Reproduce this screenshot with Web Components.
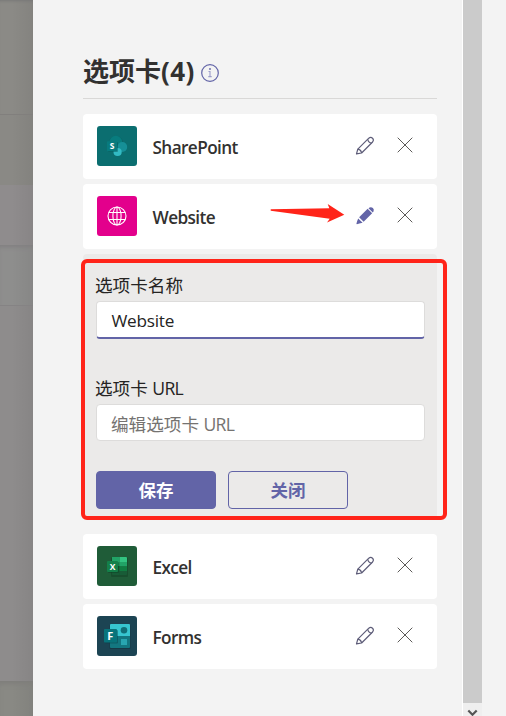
<!DOCTYPE html>
<html lang="zh-CN"><head><meta charset="utf-8"><title>选项卡</title>
<style>
html,body{margin:0;height:716px;overflow:hidden;background:#f3f3f3}
body{font-family:"Open Sans","Noto Sans CJK SC",sans-serif;color:#252423}
</style></head><body>
<tab-settings></tab-settings>
<script>
const define=(name,html)=>customElements.define(name,class extends HTMLElement{
  constructor(){super();this.attachShadow({mode:'open'});}
  connectedCallback(){
    this.shadowRoot.innerHTML=typeof html==='function'?html(this):html;
  }
});

const logos={
sharepoint:`<rect width="40" height="40" rx="3" fill="#0b6e70"/>
<circle cx="19" cy="17" r="7" fill="#0c5255" opacity=".4"/>
<circle cx="18.8" cy="16.2" r="6.4" fill="#087c7e"/><circle cx="25.3" cy="21" r="4.9" fill="#168f97"/><circle cx="20.6" cy="26" r="4.1" fill="#32bac3"/>
<rect x="11" y="16" width="10" height="10" rx="1" fill="#064f53" opacity=".45"/><rect x="10" y="15.2" width="10" height="10" rx=".8" fill="#087b7e"/>
<text x="15" y="23.3" text-anchor="middle" font-size="8.5">S</text>`,
website:`<rect width="40" height="40" rx="3" fill="#e3008c"/>
<g fill="none" stroke="#fff" stroke-width="1.1"><circle cx="20" cy="20" r="9"/><ellipse cx="20" cy="20" rx="4.1" ry="9"/><path d="M20 11v18M11.8 16.5h16.4M11.8 23.5h16.4"/></g>`,
excel:`<rect width="40" height="40" rx="3" fill="#1f5c38"/>
<rect x="14" y="11.5" width="17" height="19.5" rx="1" fill="#123f24" opacity=".5"/>
<path d="M15 11h7.5v9H15z" fill="#21a366"/><path d="M22.5 11H29a1 1 0 0 1 1 1v4h-7.500z" fill="#33c481"/><path d="M22.500 16H30v4.500h-7.500z" fill="#21a366"/><path d="M15 20h7.500v9H16a1 1 0 0 1-1-1z" fill="#185c37"/><path d="M22.500 20.500H30v4.500h-7.500z" fill="#107c41"/><path d="M22.500 25H30v3a1 1 0 0 1-1 1h-6.500z" fill="#185c37"/>
<rect x="11" y="16" width="11" height="11" rx="1" fill="#0b3f22" opacity=".45"/><rect x="10" y="15" width="11" height="11" rx="1" fill="#14804a"/>
<text x="15.500" y="23.500" text-anchor="middle" font-size="8.500">X</text>`,
forms:`<rect width="40" height="40" rx="3" fill="#1c4453"/>
<rect x="12.500" y="9" width="21" height="24" rx="1" fill="#102d38" opacity=".5"/>
<path d="M14 8h18a1 1 0 0 1 1 1v11H13V9a1 1 0 0 1 1-1z" fill="#37c6d0"/><path d="M13 20h20v11a1 1 0 0 1-1 1H14a1 1 0 0 1-1-1z" fill="#137780"/>
<circle cx="27" cy="14.200" r="3.300" fill="#117078"/><rect x="24" y="23" width="6" height="6" fill="#28a6b0"/>
<rect x="8" y="14" width="13" height="13.500" rx="1" fill="#093d47" opacity=".45"/><rect x="7" y="13" width="13" height="13.500" rx="1" fill="#08747b"/>
<text x="13.300" y="23.600" text-anchor="middle" font-size="11">F</text>`};

define('app-logo',el=>`<style>:host{display:block;width:40px;height:40px}svg{display:block}text{fill:#fff;font-family:"Open Sans",sans-serif;font-weight:700}</style><svg width="40" height="40">${logos[el.getAttribute('kind')]}</svg>`);

define('edit-icon',el=>`<style>:host{display:block;width:20px;height:20px}svg{display:block}</style><svg width="20" height="20" viewBox="0 0 20 20">${el.hasAttribute('active')
?`<g fill="#6264a7"><path d="m4.100 11.300 8.500-8.500 4.500 4.500-8.500 8.500z"/><path d="M13.500 2.200 14.600 1.500Q16.400.700 17.900 2.100t.600 3.300L17.800 6.400z"/><path d="m3.200 12.400 4.400 4.400-3.200.700-2.500.7-.5-.5.700-2.500z"/></g>`
:`<g fill="none" stroke="#5d5c78" stroke-width="1.200" stroke-linejoin="round"><path d="M1.500 17.900 2.800 13.200 13.800 2.200Q15.800.700 17.500 2.300T17.600 6L6.600 17z"/><path d="m12.800 3.200q.3 3.500 3.900 3.800M2.800 13.200q3.200.500 3.800 3.800"/></g>`}</svg>`);

define('close-icon',`<style>:host{display:block;width:16px;height:16px}svg{display:block}</style><svg width="16" height="16"><path d="M.7.700l14.600 14.600M15.300.700.700 15.300" stroke="#5c5a58" stroke-width="1" fill="none"/></svg>`);

define('tab-card',el=>`<style>:host{display:grid;grid-template-columns:40px 1fr 20px 16px;align-items:center;height:65px;box-sizing:border-box;padding:0 24.500px 1px 14px;background:#fff;border-radius:4px}
.name{padding:4px 0 0 15.500px;font:600 17.200px/24px "Open Sans",sans-serif;letter-spacing:-.6px;color:#323130}
close-icon{margin-top:-2.500px}
.edit{margin-left:-22px}</style>
<app-logo kind="${el.getAttribute('kind')}"></app-logo><span class="name"><slot></slot></span><edit-icon class="edit" ${el.hasAttribute('active')?'active':''}></edit-icon><close-icon></close-icon>`);

define('text-field',`<style>:host{display:block}label{display:block;box-sizing:border-box;height:27px;font-size:17.600px;line-height:22px;color:#252423;white-space:nowrap;margin-left:-1px}
.box{box-sizing:border-box;height:38px;border:1px solid #dddcdb;border-radius:4px;background:#fff;padding:1px 14.500px;font-size:17.200px;line-height:36px;letter-spacing:-.25px;color:#252423;white-space:nowrap}
:host([focused]) .box{border-bottom:2px solid #6264a7}
:host([empty]) .box{height:37px;color:#757371;font-size:17.600px;letter-spacing:0;padding-left:14px}</style>
<label><slot name="label"></slot></label><div class="box"><slot></slot></div>`);

define('action-button',`<style>:host{display:block;box-sizing:border-box;width:120px;height:38px;border:1px solid #6264a7;border-radius:4px;text-align:center;font-size:17.500px;line-height:36px;font-weight:700;color:#6264a7}:host([primary]){background:#6264a7;color:#fff}</style><slot></slot>`);

define('edit-form',`<style>:host{display:block;position:relative;box-sizing:border-box;height:265px;margin-bottom:10px;padding:20px 12px 0 13px;background:#ebeae9;border-radius:4px}
text-field+text-field{margin-top:38px}.actions{display:flex;gap:12px;margin-top:30px}
.mark{position:absolute;left:-2px;top:5px;width:366px;height:261px;box-sizing:border-box;border:4px solid #ff2419;border-radius:6px;pointer-events:none}.l{letter-spacing:-.8px}</style>
<text-field focused><span slot="label">选项卡名称</span>Website</text-field>
<text-field empty><span slot="label">选项卡 <span class="l">URL</span></span>编辑选项卡 <span class="l">URL</span></text-field>
<div class="actions"><action-button primary>保存</action-button><action-button>关闭</action-button></div><div class="mark"></div>`);

define('panel-heading',`<style>:host{display:flex;align-items:center;box-sizing:border-box;height:55px;border-bottom:1px solid #d9d8d7;margin-bottom:15px;gap:6px}
h1{margin:0;font-size:26px;line-height:36px;font-weight:700;color:#323130;white-space:nowrap}svg{display:block;margin-top:3px}</style>
<h1><slot></slot></h1><svg width="18" height="18"><circle cx="9" cy="9" r="8.300" fill="none" stroke="#6264a7" stroke-width="1.200"/><path d="M7.500 7.500H9v5M7.300 12.600h3.400" fill="none" stroke="#9b9cc9" stroke-width="1.100"/><circle cx="9" cy="5" r=".9" fill="#6264a7"/></svg>`);

define('page-backdrop',`<style>:host{display:grid;grid-template-rows:115px 70px 60px 61px 375px 35px;background:#8c8a8b}
div{box-sizing:border-box;background:linear-gradient(90deg,#0000 35%,#0000000d),var(--c)}
.a{--c:#8b8a86;border-bottom:1px solid #817f7d;box-shadow:inset 0 3px 3px -2px #777}.b{--c:#8a8985}.c{--c:#8f8c8d}.d{--c:#8e8e8d;border-bottom:1px solid #858384;box-shadow:inset 0 4px 4px -2px #817f80}.e{--c:#8e8c8c}.f{--c:#898984;box-shadow:inset 0 5px 5px -2px #7f7e7b}</style>
<div class="a"></div><div class="b"></div><div class="c"></div><div class="d"></div><div class="e"></div><div class="f"></div>`);

define('scroll-track',`<style>:host{display:grid;grid-template-rows:703px 13px;box-sizing:border-box;border-left:1px solid #fff;background:#efefef}.thumb{background:#cbcbcb;width:19px}svg{display:block}</style><div class="thumb"></div><svg width="20" height="13"><path d="m5.300 7.500 4.200 4.200 4.200-4.200" stroke="#555" stroke-width="2.200" fill="none"/></svg>`);

define('pointer-arrow',`<style>:host{display:block;position:absolute;left:187px;top:89px;pointer-events:none}svg{display:block}</style><svg width="76" height="21"><path d="M.7 6.300 59.300 5.300 57.700 1 74.300 11.700 57 19.500 59.700 15.700.7 7.700z" fill="#ff2419"/></svg>`);

define('tab-list',`<style>:host{display:grid;row-gap:5px;position:relative}</style><slot></slot><pointer-arrow></pointer-arrow>`);

define('tab-settings',`<style>:host{display:grid;grid-template-columns:33px 429px 20px 1fr;height:716px;background:#f3f3f3}
main{padding:44px 25px 0 50px}.count{letter-spacing:.4px}</style><page-backdrop></page-backdrop><main><panel-heading>选项卡<span class="count">(4)</span></panel-heading>
<tab-list><tab-card kind="sharepoint">SharePoint</tab-card><tab-card kind="website" active>Website</tab-card><edit-form></edit-form><tab-card kind="excel">Excel</tab-card><tab-card kind="forms">Forms</tab-card></tab-list></main><scroll-track></scroll-track>`);
</script></body></html>
